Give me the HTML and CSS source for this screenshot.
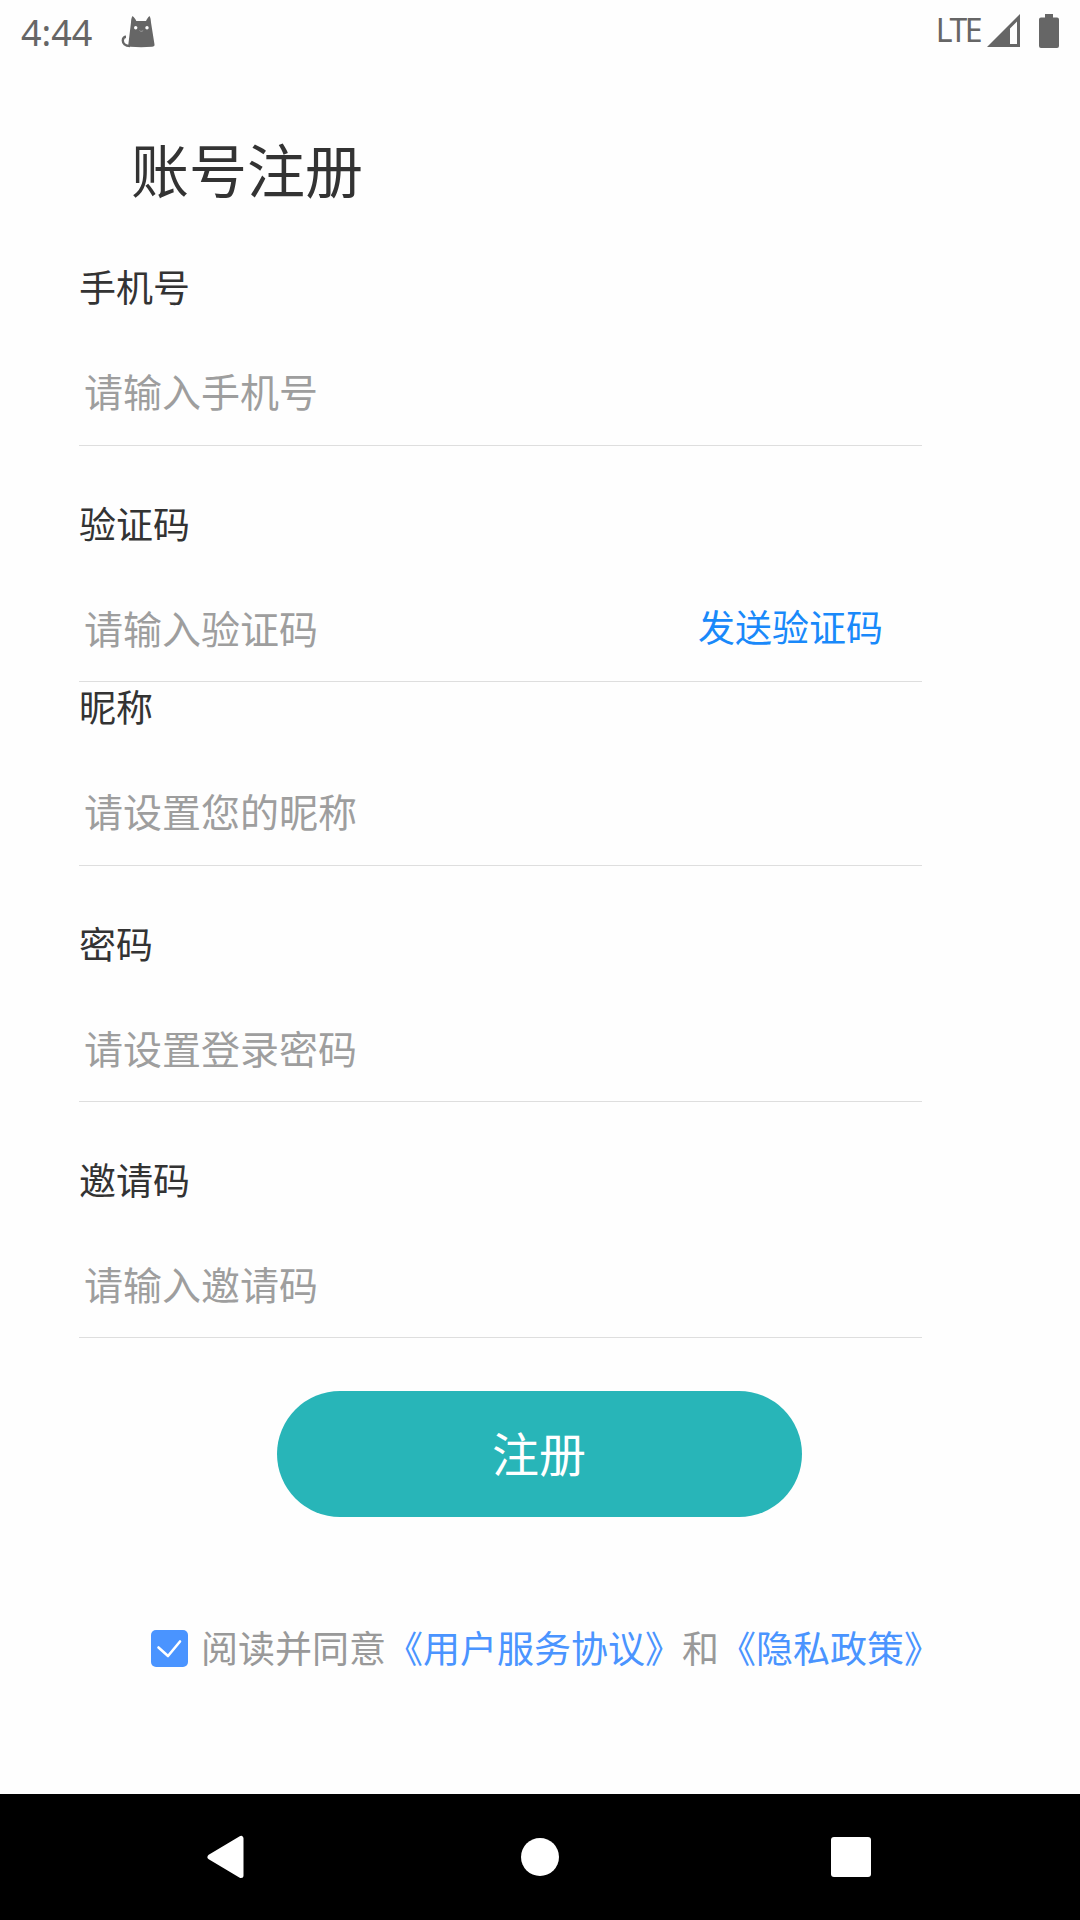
FILE: index.html
```html
<!DOCTYPE html>
<html lang="zh-CN">
<head>
<meta charset="utf-8">
<title>账号注册</title>
<link rel="stylesheet" href="styles.css">
</head>
<body>
<div class="screen">
  <header class="status">
    <span class="time">4:44</span>
    <svg class="cat" width="36" height="34" viewBox="0 0 36 34">
      <path class="tail" d="M9 31C4 31 1.8 28.500 1.800 25.500C1.800 23 3.500 21.800 5 21.800"/>
      <path d="M11.500 1C13 2 14.500 4 15.300 6H25C26 4 27 2 28.500 1C29.700 3 29.800 5 30 7.500L33.500 29.500Q33.800 31.500 31 31.700Q20 32.600 9.500 31.700Q7 31.500 7.400 29L10 7.500C10.100 5 10.300 3 11.500 1Z"/>
      <circle class="eye" cx="14.700" cy="12.700" r="1.700"/>
      <circle class="eye" cx="26" cy="12.700" r="1.700"/>
      <path class="mouth" d="M18.500 15.500l1.200.8h1.300l1.200-.8"/>
    </svg>
    <span class="network">LTE</span>
    <svg class="signal" width="33" height="33" viewBox="0 0 33 33">
      <path fill-rule="evenodd" d="M0 33L33 0V33ZM23 14.500V30H30V7.500Z"/>
    </svg>
    <svg class="battery" width="20" height="34" viewBox="0 0 20 34">
      <path d="M6 0H14V3.500H18Q20 3.500 20 5.500V32Q20 34 18 34H2Q0 34 0 32V5.500Q0 3.500 2 3.500H6Z"/>
    </svg>
  </header>

  <main class="content">
    <h1 class="title">账号注册</h1>
    <form class="form">
      <div class="field">
        <label class="label">手机号</label>
        <div class="entry"><span class="hint">请输入手机号</span></div>
      </div>
      <div class="field spaced field-code">
        <label class="label">验证码</label>
        <div class="entry"><span class="hint">请输入验证码</span><a class="send">发送验证码</a></div>
      </div>
      <div class="field">
        <label class="label">昵称</label>
        <div class="entry"><span class="hint">请设置您的昵称</span></div>
      </div>
      <div class="field spaced">
        <label class="label">密码</label>
        <div class="entry"><span class="hint">请设置登录密码</span></div>
      </div>
      <div class="field spaced">
        <label class="label">邀请码</label>
        <div class="entry"><span class="hint">请输入邀请码</span></div>
      </div>
    </form>
    <button class="submit">注册</button>
    <div class="agreement">
      <svg class="check" width="37" height="37" viewBox="0 0 37 37">
        <rect width="37" height="37" rx="5"/>
        <path d="M7.500 17.500L17 26L29 11.500"/>
      </svg>
      <p class="terms">阅读并同意<a class="link">《用户服务协议》</a>和<a class="link">《隐私政策》</a></p>
    </div>
  </main>

  <nav class="nav">
    <svg width="44" height="44" viewBox="0 0 44 44"><path d="M35 3.500V40.500L4 22Z"/></svg>
    <svg width="44" height="44" viewBox="0 0 44 44"><circle cx="22" cy="22" r="19"/></svg>
    <svg width="44" height="44" viewBox="0 0 44 44"><rect x="1" y="2" width="40" height="40" rx="3"/></svg>
  </nav>
</div>
</body>
</html>
```
FILE: styles.css
```css
* { box-sizing: border-box; }
body {
  margin: 0;
  background: #fefefe;
  font-family: "Noto Sans CJK SC", sans-serif;
}
.screen {
  width: 1080px;
  height: 1920px;
  display: flex;
  flex-direction: column;
  overflow: hidden;
}
.status {
  height: 63px;
  padding: 0 21px;
  display: flex;
  align-items: flex-start;
  color: #666;
  font-family: "Noto Sans", sans-serif;
  white-space: nowrap;
}
.status svg { fill: #666; flex: none; }
.time { font-size: 36px; line-height: 40px; margin-top: 13px; width: 100px; }
.cat { margin-top: 15px; }
.cat .tail { fill: none; stroke: #666; stroke-width: 2.4; }
.cat .eye { fill: #fefefe; }
.cat .mouth { fill: none; stroke: #999; stroke-width: 1; }
.network { font-size: 32px; line-height: 36px; letter-spacing: -2.5px; margin: 12px 7px 0 auto; }
.signal { margin-top: 14px; }
.battery { margin: 14px 0 0 19px; }

.content { flex: 1; }
.title {
  margin: 65px 0 0 131px;
  font-size: 58px;
  line-height: 80px;
  font-weight: 400;
  color: #333;
}
.form {
  width: 843px;
  margin: 54px 0 0 79px;
  display: flex;
  flex-direction: column;
  gap: 52px;
}
.field-code { margin-bottom: -52px; }
.field { height: 184px; display: flex; flex-direction: column; justify-content: space-between; }
.label { font-size: 37px; line-height: 49px; color: #333; }
.entry {
  height: 110px;
  padding: 0 39px 0 5px;
  border-bottom: 1px solid #dedede;
  display: flex;
  align-items: center;
  justify-content: space-between;
}
.spaced { padding-top: 1px; }
.spaced .entry { padding-top: 2px; }
.hint { font-size: 39px; line-height: 57px; color: #9e9e9e; }
.send { font-size: 37px; line-height: 53px; padding-bottom: 2px; color: #1989fa; }
.submit {
  display: block;
  width: 525px;
  height: 126px;
  margin: 53px 0 0 277px;
  padding: 0 1px 4px 0;
  border: 0;
  border-radius: 63px;
  background: #28b5b8;
  color: #fff;
  font-family: inherit;
  font-size: 47px;
  line-height: 122px;
}
.agreement {
  height: 54px;
  margin: 104px 0 0 151px;
  display: flex;
  align-items: center;
}
.check rect { fill: #4a94ff; }
.check path { fill: none; stroke: #fff; stroke-width: 2.6; stroke-linecap: round; stroke-linejoin: round; }
.terms {
  margin: 0 0 0 13px;
  padding-bottom: 2px;
  font-size: 37px;
  line-height: 54px;
  color: #999;
  white-space: nowrap;
}
.link { color: #4a94ff; }

.nav {
  height: 126px;
  padding: 0 206px;
  background: #000;
  display: flex;
  align-items: center;
  justify-content: space-between;
}
.nav svg { fill: #fff; stroke: #fff; stroke-width: 0; }
.nav path { stroke-width: 5; stroke-linejoin: round; }
```
